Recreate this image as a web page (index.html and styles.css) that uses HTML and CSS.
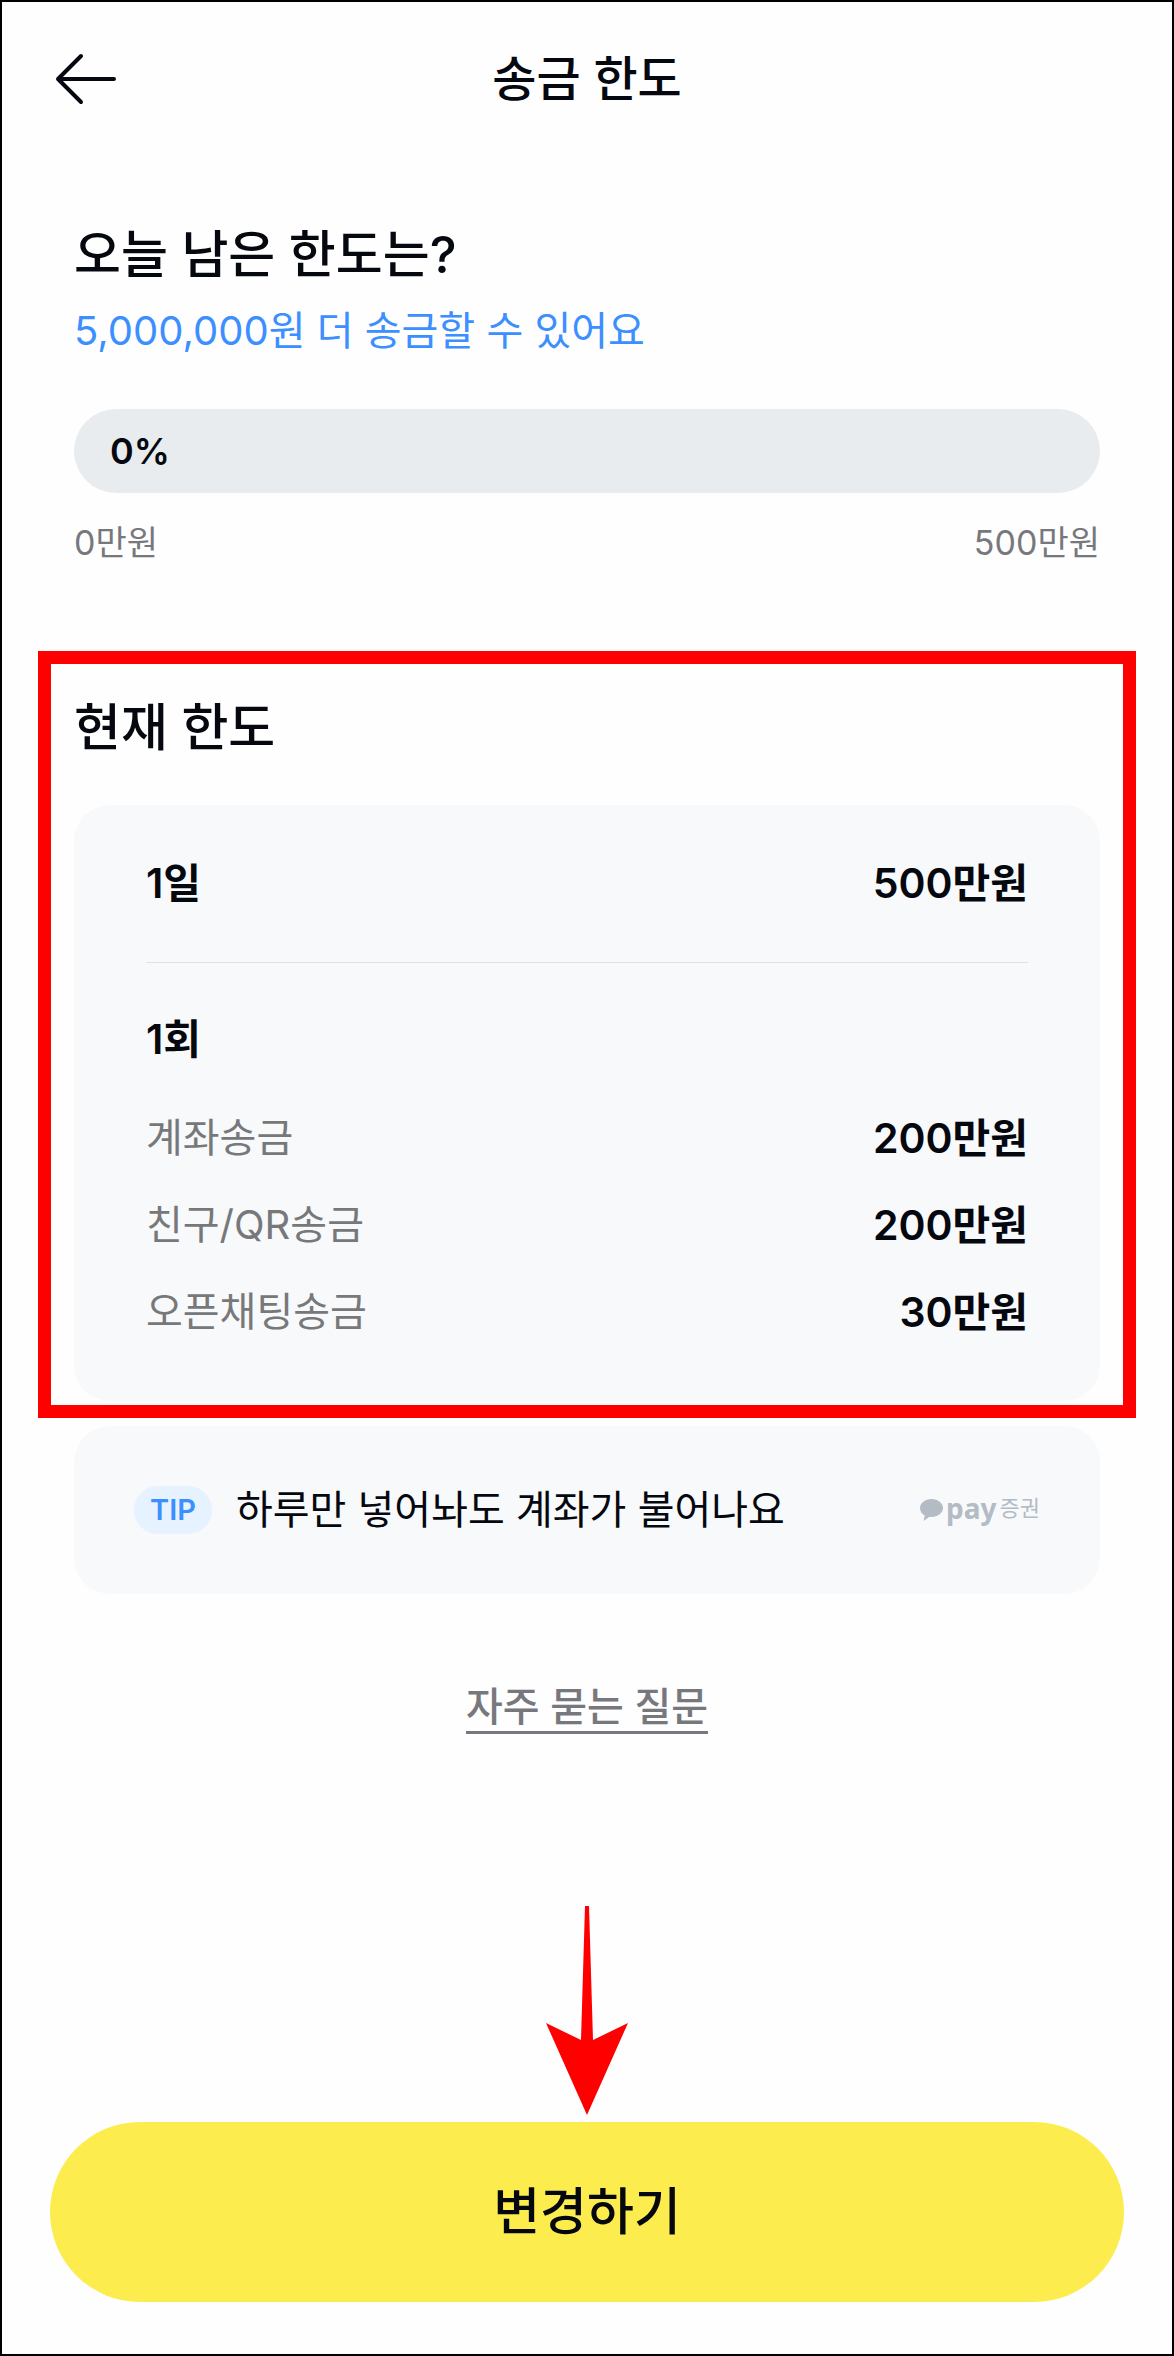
FILE: index.html
```html
<!DOCTYPE html>
<html lang="ko">
<head>
    <meta charset="UTF-8">
    <meta name="viewport" content="width=device-width, initial-scale=1.0">
    <title>송금 한도</title>
    <link rel="stylesheet" href="styles.css">
</head>
<body>
    <header class="header">
        <button class="back" aria-label="뒤로">
            <svg viewBox="0 0 62 52" width="62" height="52" fill="none" stroke="currentColor" stroke-width="4" stroke-linecap="round" stroke-linejoin="round">
                <path d="M59 26H3M26 3L3 26l23 23"/>
            </svg>
        </button>
        <h1>송금 한도</h1>
    </header>

    <main>
        <section class="today">
            <h2>오늘 남은 한도는?</h2>
            <p class="remain">5,000,000원 더 송금할 수 있어요</p>
            <div class="bar" role="progressbar" aria-valuenow="0" aria-valuemin="0" aria-valuemax="100">0%</div>
            <div class="range">
                <span>0만원</span>
                <span>500만원</span>
            </div>
        </section>

        <section class="current">
            <h2>현재 한도</h2>
            <div class="card">
                <div class="row strong">
                    <span>1일</span>
                    <span class="amount">500만원</span>
                </div>
                <hr>
                <h3>1회</h3>
                <div class="rows">
                    <div class="row">
                        <span>계좌송금</span>
                        <span class="amount">200만원</span>
                    </div>
                    <div class="row">
                        <span>친구/QR송금</span>
                        <span class="amount">200만원</span>
                    </div>
                    <div class="row">
                        <span>오픈채팅송금</span>
                        <span class="amount">30만원</span>
                    </div>
                </div>
            </div>
        </section>

        <a class="tip" href="#">
            <span class="badge">TIP</span>
            <span>하루만 넣어놔도 계좌가 불어나요</span>
            <span class="brand">
                <svg viewBox="0 0 23 26" width="23" height="26" fill="currentColor">
                    <path d="M11.500 4C5.200 4 0 8 0 13c0 3.300 2 6 4.800 7.500L3.500 26l6-4.200 2 .1C17.800 21.900 23 18 23 13S17.800 4 11.500 4z"/>
                </svg>
                <b>pay</b>
                <span>증권</span>
            </span>
        </a>

        <a class="faq" href="#">자주 묻는 질문</a>
    </main>

    <footer class="bottom">
        <svg class="arrow" viewBox="0 0 82 209" width="82" height="209" fill="#ff0000">
            <path d="M39 0h4l4 134 35-17-41 92L0 117l35 17z"/>
        </svg>
        <button class="change">변경하기</button>
    </footer>
</body>
</html>
```
FILE: styles.css
```css
* {
    box-sizing: border-box;
}
body {
    display: flex;
    flex-direction: column;
    min-height: 100vh;
    margin: 0;
    border: 2px solid #000;
    background-color: #fefefe;
    color: #060810;
    font-family: Inter, "Noto Sans CJK KR", sans-serif;
    font-size: 40px;
    line-height: 48px;
}
h1, h2, h3, p {
    margin: 0;
}
button {
    border: none;
    padding: 0;
    font-family: inherit;
    color: inherit;
    cursor: pointer;
}
a {
    color: inherit;
    text-decoration: none;
}
.header {
    display: grid;
    grid-template-columns: 64px 1fr 64px;
    align-items: center;
    height: 154px;
    padding: 0 53px;
}
.back {
    display: flex;
    background: none;
}
h1 {
    text-align: center;
    font-size: 48px;
    font-weight: 500;
    line-height: 64px;
}
h2 {
    font-size: 51px;
    font-weight: 500;
    line-height: 64px;
}
h3 {
    font-size: 41px;
    font-weight: 600;
}
.today {
    padding: 67px 72px 84px;
}
.remain {
    margin-top: 20px;
    color: #3b8fff;
}
.bar {
    display: flex;
    align-items: center;
    height: 84px;
    margin-top: 54px;
    padding: 0 36px;
    border-radius: 42px;
    background-color: #e8ecef;
    font-size: 36px;
    font-weight: 600;
}
.range {
    display: flex;
    justify-content: space-between;
    margin-top: 26px;
    color: #77787d;
    font-size: 34px;
}
.current {
    margin: 0 36px;
    padding: 32px 23px 4px;
    border: 13px solid #ff0000;
}
.card {
    margin-top: 45px;
    padding: 54px 72px 65px;
    border-radius: 36px;
    background-color: #f8f9fb;
}
.row {
    display: flex;
    justify-content: space-between;
    color: #77787a;
}
.strong, .amount {
    color: #060810;
    font-size: 41px;
    font-weight: 600;
}
hr {
    height: 1px;
    margin: 55px 0 52px;
    border: none;
    background-color: #dfe2e5;
}
.rows {
    display: flex;
    flex-direction: column;
    gap: 39px;
    margin-top: 51px;
}
.tip {
    display: flex;
    align-items: center;
    gap: 24px;
    height: 168px;
    margin: 8px 72px 0;
    padding: 0 60px;
    border-radius: 36px;
    background-color: #f8f9fb;
}
.badge {
    padding: 0 16px;
    border-radius: 24px;
    background-color: #e6f2ff;
    color: #3b8fff;
    font-size: 29px;
    font-weight: 600;
}
.brand {
    display: flex;
    align-items: center;
    gap: 3px;
    margin-left: auto;
    padding-bottom: 4px;
    color: #b3bbc4;
    font-size: 22px;
}
.brand b {
    font-family: "Noto Sans", sans-serif;
    font-size: 28px;
}
.faq {
    display: block;
    width: fit-content;
    margin: 89px auto 0;
    border-bottom: 3px solid #77787d;
    color: #77787d;
    font-weight: 500;
}
.bottom {
    display: flex;
    flex-direction: column;
    align-items: center;
    gap: 7px;
    margin-top: auto;
    padding: 0 48px 52px;
}
.change {
    width: 100%;
    height: 180px;
    padding-bottom: 8px;
    border-radius: 90px;
    background-color: #fcec4e;
    font-size: 51px;
    font-weight: 500;
}
```
